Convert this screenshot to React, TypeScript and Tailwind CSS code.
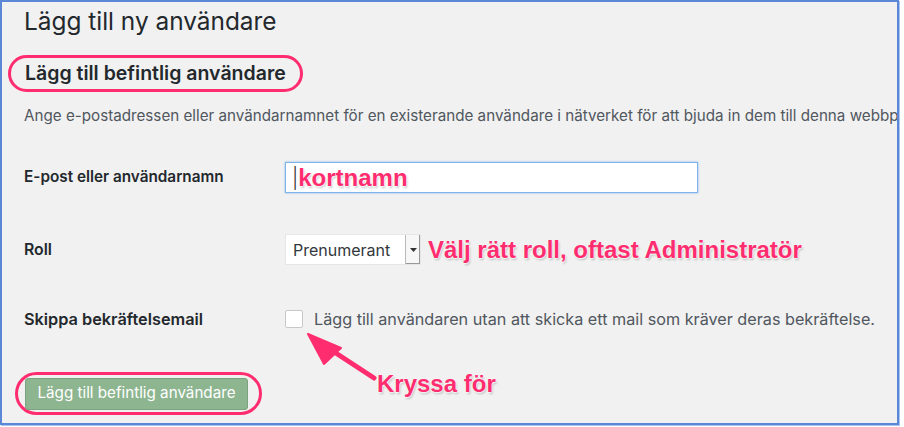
import React from "react";

const sys = { fontFamily: "Inter, 'Liberation Sans', Arial, sans-serif" };
const anno = {
  fontFamily: "'Liberation Sans', Arial, sans-serif",
  textShadow: "0 1px 2px rgba(255,255,255,1), 0 0 2px rgba(255,255,255,1), 1px 2px 2px rgba(0,0,0,0.25)",
};

export default function App() {
  return (
    <div className="w-[904px] h-[427px] bg-white overflow-hidden">
      <div className="relative w-[899px] h-[425px] border-2 border-[#5a87d6] bg-[#f1f1f1] shadow-[1px_1px_0_#a9c4f0] overflow-hidden" style={sys}>
        <div className="pl-[22px] pt-[3px]">
          <h1 className="text-[24.4px] leading-[32px] text-[#23282d] font-normal whitespace-nowrap">Lägg till ny användare</h1>
          <div className="mt-[18px] inline-flex items-center h-[37px] -ml-[16px] pl-[14px] pr-[14px] rounded-full border-[3px] border-[#ff2d6f]">
            <h2 className="text-[19.5px] font-semibold text-[#23282d] whitespace-nowrap">Lägg till befintlig användare</h2>
          </div>
          <p className="mt-[14px] text-[15.2px] leading-[20px] text-[#50575e] whitespace-nowrap">
            Ange e-postadressen eller användarnamnet för en existerande användare i nätverket för att bjuda in dem till denna webbplats.
          </p>

          <div className="mt-[36px] flex items-center h-[31px]">
            <div className="w-[261px] text-[15.3px] font-semibold text-[#23282d] whitespace-nowrap">E-post eller användarnamn</div>
            <div className="w-[413px] h-[31px] bg-white border border-[#7eb4ea] shadow-[0_0_2px_#7eb4ea] flex items-center pl-[6px]">
              <span className="text-[#333] text-[20px] font-light leading-none">|</span>
              <span className="text-[24px] font-bold text-[#ff2d6f] leading-none" style={anno}>kortnamn</span>
            </div>
          </div>

          <div className="mt-[41px] flex items-center h-[31px]">
            <div className="w-[261px] text-[15.8px] font-semibold text-[#23282d]">Roll</div>
            <div className="flex h-[31px] bg-white border border-[#e6e6e6]">
              <div className="w-[119px] pl-[7px] flex items-center text-[16px] text-[#32373c] whitespace-nowrap">Prenumerant</div>
              <div className="w-[15px] bg-[#f7f7f7] border-l border-[#bbb] shadow-[inset_-1px_-1px_0_#999] flex items-center justify-center">
                <svg width="7" height="4" viewBox="0 0 7 4"><path d="M0 0h7L3.5 4z" fill="#333" /></svg>
              </div>
            </div>
            <div className="ml-[7px] text-[24px] font-bold text-[#ff2d6f] whitespace-nowrap" style={anno}>Välj rätt roll, oftast Administratör</div>
          </div>

          <div className="mt-[44px] flex items-center h-[20px]">
            <div className="w-[261px] text-[16.3px] font-semibold text-[#23282d] whitespace-nowrap">Skippa bekräftelsemail</div>
            <div className="w-[18px] h-[18px] bg-white border border-[#c8c8c8] rounded-[2px]" />
            <div className="ml-[11px] text-[16.2px] text-[#50575e] whitespace-nowrap">Lägg till användaren utan att skicka ett mail som kräver deras bekräftelse.</div>
          </div>

          <div className="mt-[43px] flex items-center">
            <div className="-ml-[9px] inline-flex items-center h-[43px] pl-[7px] pr-[11px] rounded-full border-[3px] border-[#ff2d6f]">
              <div className="w-[223px] h-[32px] flex items-center justify-center bg-[#8db590] border border-[#7aa47d] rounded-[3px] text-[15.2px] text-white whitespace-nowrap">
                Lägg till befintlig användare
              </div>
            </div>
          </div>
        </div>

        <div className="absolute left-[375px] top-[364px] text-[24px] font-bold text-[#ff2d6f] whitespace-nowrap" style={anno}>Kryssa för</div>

        <svg className="absolute left-[298px] top-[322px]" width="90" height="60" viewBox="0 0 90 60">
          <line x1="74" y1="54" x2="22" y2="20" stroke="#ff2d6f" strokeWidth="5" strokeLinecap="round" />
          <path d="M8 10 L41 24 L24 40 Z" fill="#ff2d6f" strokeLinejoin="round" stroke="#ff2d6f" strokeWidth="2" />
        </svg>
      </div>
    </div>
  );
}
